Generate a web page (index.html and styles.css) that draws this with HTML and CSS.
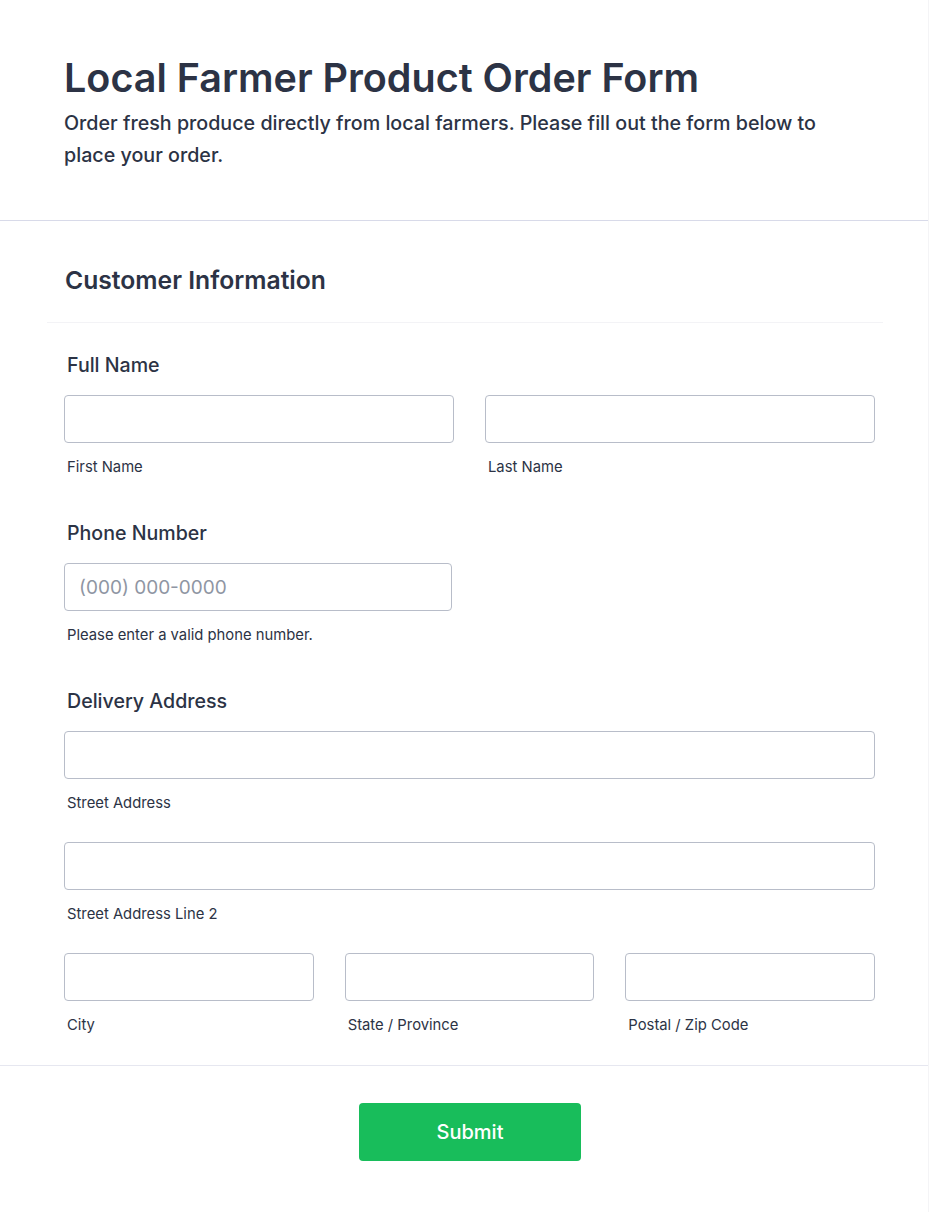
FILE: index.html
```html
<!DOCTYPE html>
<html lang="en">
<head>
<meta charset="utf-8">
<title>Local Farmer Product Order Form</title>
<link rel="stylesheet" href="styles.css">
</head>
<body>
<form class="form">
  <header class="form-header">
    <h1 class="form-title">Local Farmer Product Order Form</h1>
    <p class="form-subtitle">Order fresh produce directly from local farmers. Please fill out the form below to place your order.</p>
  </header>

  <section class="section">
    <h2 class="section-title">Customer Information</h2>
    <div class="fields">
      <div class="field">
        <label class="field-label">Full Name</label>
        <div class="row cols-2">
          <div class="sub">
            <input class="input" type="text">
            <span class="sublabel">First Name</span>
          </div>
          <div class="sub">
            <input class="input" type="text">
            <span class="sublabel">Last Name</span>
          </div>
        </div>
      </div>

      <div class="field">
        <label class="field-label">Phone Number</label>
        <div class="sub phone">
          <input class="input" type="tel" placeholder="(000) 000-0000">
          <span class="sublabel">Please enter a valid phone number.</span>
        </div>
      </div>

      <div class="field">
        <label class="field-label">Delivery Address</label>
        <div class="sub">
          <input class="input" type="text">
          <span class="sublabel">Street Address</span>
        </div>
        <div class="sub next">
          <input class="input" type="text">
          <span class="sublabel">Street Address Line 2</span>
        </div>
        <div class="row cols-3 next">
          <div class="sub">
            <input class="input" type="text">
            <span class="sublabel">City</span>
          </div>
          <div class="sub">
            <input class="input" type="text">
            <span class="sublabel">State / Province</span>
          </div>
          <div class="sub">
            <input class="input" type="text">
            <span class="sublabel">Postal / Zip Code</span>
          </div>
        </div>
      </div>
    </div>
  </section>

  <footer class="form-footer">
    <button class="submit" type="button">Submit</button>
  </footer>
</form>
</body>
</html>
```

FILE: styles.css
```css
* { box-sizing: border-box; }

body {
  margin: 0;
  background: #ffffff;
  font-family: Inter, "Noto Sans", sans-serif;
  color: #2c3345;
}

.form {
  width: 929px;
  min-height: 1212px;
  border-right: 1px solid #f4f4f6;
}

.form-header {
  padding: 54px 64px 49px 64px;
  border-bottom: 1px solid #d8dae9;
}

.form-title {
  margin: 0;
  font-size: 39.5px;
  line-height: 48px;
  font-weight: 600;
  color: #2c3345;
}

.form-subtitle {
  margin: 5px 0 0 0;
  font-size: 19.7px;
  line-height: 32px;
  font-weight: 500;
  color: #2c3345;
}

.section {
  padding: 43px 45px 29px 47px;
  border-bottom: 1px solid #e6e7f0;
}

.section-title {
  margin: 0 0 0 18px;
  font-size: 24.7px;
  line-height: 32px;
  font-weight: 600;
  color: #2c3345;
}

.fields {
  margin-top: 26px;
  border-top: 1px solid #f3f3f6;
  padding: 29px 8px 0 17px;
  display: flex;
  flex-direction: column;
  gap: 42px;
}

.field {
  display: flex;
  flex-direction: column;
}

.field-label {
  padding-left: 3px;
  font-size: 19.6px;
  line-height: 26px;
  font-weight: 500;
  margin-bottom: 17px;
}

.row {
  display: grid;
  column-gap: 31px;
}

.cols-2 { grid-template-columns: 1fr 1fr; }
.cols-3 { grid-template-columns: 1fr 1fr 1fr; }

.sub {
  display: flex;
  flex-direction: column;
}

.sub.phone { width: 388px; }

.next { margin-top: 28px; }

.input {
  width: 100%;
  height: 48px;
  border: 1px solid #b8bdc9;
  border-radius: 4px;
  padding: 0 14px;
  font-family: Inter, "Noto Sans", sans-serif;
  font-size: 19px;
  color: #2c3345;
  background: #ffffff;
  outline: none;
}

.input::placeholder {
  color: #8f96a3;
}

.sublabel {
  margin-top: 13px;
  padding-left: 3px;
  font-size: 14.8px;
  line-height: 22px;
  font-weight: 400;
  color: #2c3345;
}

.form-footer {
  display: flex;
  justify-content: center;
  padding: 37px 52px 0 64px;
}

.submit {
  width: 222px;
  height: 58px;
  border: none;
  border-radius: 4px;
  background: #18bd5b;
  color: #ffffff;
  font-family: Inter, "Noto Sans", sans-serif;
  font-size: 20px;
  font-weight: 500;
  cursor: pointer;
}
```
